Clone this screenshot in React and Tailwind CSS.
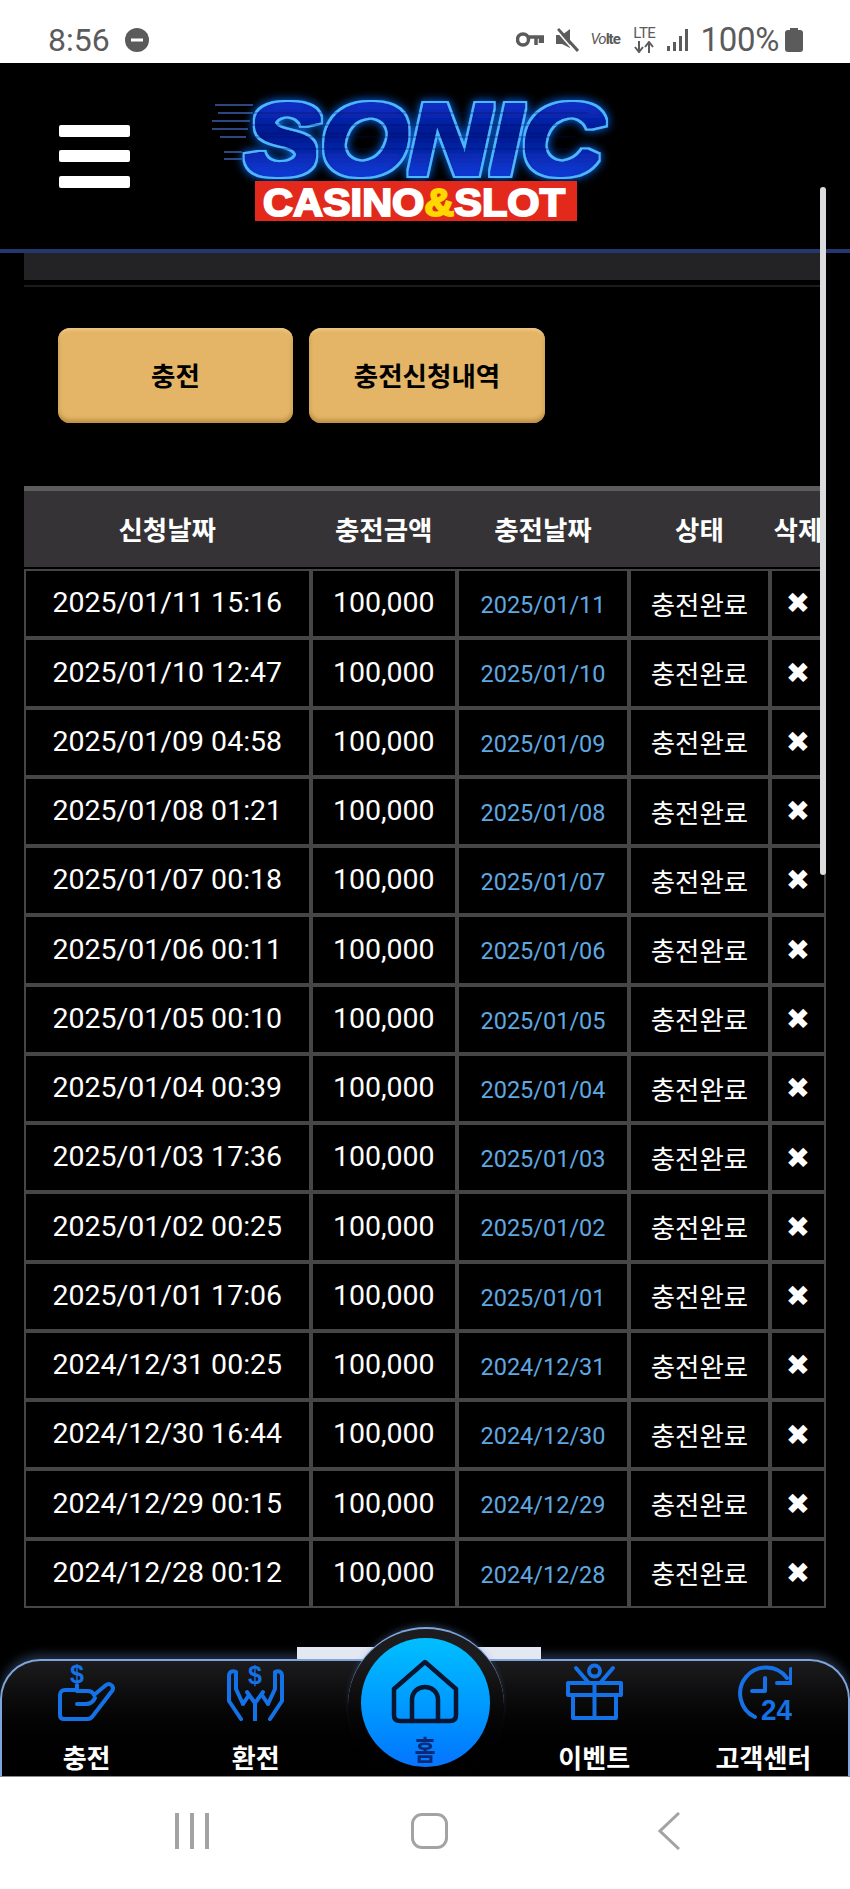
import React from 'react';

const rows = [
  ['2025/01/11 15:16', '2025/01/11'],
  ['2025/01/10 12:47', '2025/01/10'],
  ['2025/01/09 04:58', '2025/01/09'],
  ['2025/01/08 01:21', '2025/01/08'],
  ['2025/01/07 00:18', '2025/01/07'],
  ['2025/01/06 00:11', '2025/01/06'],
  ['2025/01/05 00:10', '2025/01/05'],
  ['2025/01/04 00:39', '2025/01/04'],
  ['2025/01/03 17:36', '2025/01/03'],
  ['2025/01/02 00:25', '2025/01/02'],
  ['2025/01/01 17:06', '2025/01/01'],
  ['2024/12/31 00:25', '2024/12/31'],
  ['2024/12/30 16:44', '2024/12/30'],
  ['2024/12/29 00:15', '2024/12/29'],
  ['2024/12/28 00:12', '2024/12/28'],
];

const gridCols = 'grid grid-cols-[286.5px_146.5px_172px_141px_56px]';
const cell = 'flex items-center justify-center border-2 border-[#464646]';

const StatusBar = () => (
  <div className="h-[63px] shrink-0 bg-white flex items-center justify-between pl-[48px] pr-[47px] pt-[16px] text-[#5b5b5b]">
    <div className="flex items-center gap-[15px]">
      <span className="text-[32px] leading-none">8:56</span>
      <svg width="24" height="24" viewBox="0 0 24 24">
        <circle cx="12" cy="12" r="12" fill="#5b5b5b" />
        <rect x="6" y="10.5" width="12" height="3" fill="#fff" />
      </svg>
    </div>
    <div className="flex items-center">
      <svg width="28" height="17" viewBox="0 0 28 17" fill="none" stroke="#5b5b5b" strokeWidth="3.5">
        <circle cx="7" cy="8.5" r="5.5" />
        <path d="M13 6H27V12M20 6V14M24.5 6V12" />
      </svg>
      <svg className="ml-[11px]" width="24" height="24" viewBox="0 0 24 24">
        <path d="M1 7H7L15 1V20L7 16H1Z" fill="#5b5b5b" />
        <path d="M3 1L23 23" stroke="#5b5b5b" strokeWidth="3" />
        <path d="M1 2L20 24" stroke="#fff" strokeWidth="1.5" />
      </svg>
      <span className="ml-[11px] w-[32px] text-[15px] font-bold leading-none tracking-[-1px] whitespace-nowrap"><span className="italic font-normal">Vo</span>lte</span>
      <div className="ml-[9px] w-[26px] flex flex-col items-center leading-none">
        <span className="text-[15px] tracking-[-0.5px]">LTE</span>
        <svg width="24" height="12" viewBox="0 0 24 12" fill="none" stroke="#5b5b5b" strokeWidth="2">
          <path d="M7 0V10M3 6L7 11L11 6M17 12V2M13 6L17 1L21 6" />
        </svg>
      </div>
      <svg className="ml-[10px]" width="22" height="22" viewBox="0 0 22 22" fill="#5b5b5b">
        <rect x="0" y="17" width="3" height="5" />
        <rect x="6" y="13" width="3" height="9" />
        <rect x="12" y="7" width="3" height="15" />
        <rect x="18" y="0" width="3" height="22" />
      </svg>
      <span className="ml-[11px] text-[33px] leading-none tracking-[-0.3px]">100%</span>
      <svg className="ml-[6px]" width="18" height="24" viewBox="0 0 18 24" fill="#5b5b5b">
        <rect x="5" y="0" width="8" height="3" />
        <rect x="0" y="2" width="18" height="22" rx="3" />
      </svg>
    </div>
  </div>
);

const Logo = () => (
  <svg width="410" height="150" viewBox="0 0 410 150" className="ml-[80px] mt-[8px]">
    <defs>
      <linearGradient id="sonicFill" x1="0" y1="0" x2="0" y2="1">
        <stop offset="0" stopColor="#0a40ee" />
        <stop offset="0.45" stopColor="#041688" />
        <stop offset="1" stopColor="#0a48f4" />
      </linearGradient>
      {/* neon outline + glow, all from the one text element */}
      <filter id="sonicNeon" x="-10%" y="-30%" width="120%" height="160%">
        <feMorphology in="SourceGraphic" operator="dilate" radius="2" result="fat" />
        <feMorphology in="SourceAlpha" operator="dilate" radius="3.5" result="outer" />
        <feFlood floodColor="#4db6ff" />
        <feComposite in2="outer" operator="in" result="line" />
        <feGaussianBlur in="outer" stdDeviation="5" result="blur" />
        <feFlood floodColor="#0b6cff" />
        <feComposite in2="blur" operator="in" result="glow" />
        <feMerge>
          <feMergeNode in="glow" />
          <feMergeNode in="line" />
          <feMergeNode in="fat" />
        </feMerge>
      </filter>
    </defs>
    <path d="M5 20H43M8 28H43M2 36H40M2 44H38M10 52H36M14 67H32M14 74H32" stroke="#3c5fa8" strokeWidth="1.5" />
    <text x="35" y="89" textLength="358" lengthAdjust="spacingAndGlyphs" fontFamily="Liberation Sans" fontStyle="italic" fontWeight="700" fontSize="100" fill="url(#sonicFill)" filter="url(#sonicNeon)">SONIC</text>
    <path d="M44 28H378M40 40H372M38 52H366M36 64H360" stroke="#020e5a" strokeWidth="1.5" opacity="0.35" />
    <rect x="45" y="96" width="322" height="40" fill="#e3281c" />
    <text x="53" y="131" textLength="302" lengthAdjust="spacingAndGlyphs" fontFamily="Liberation Sans" fontWeight="700" fontSize="39" fill="#fff" stroke="#fff" strokeWidth="2">
      CASINO<tspan fill="#ffd800" stroke="#ffd800">&amp;</tspan>SLOT
    </text>
  </svg>
);

const Header = () => (
  <header className="h-[190px] shrink-0 bg-black border-b-[4px] border-[#23386f] flex items-center pl-[59px]">
    <div className="w-[71px] flex flex-col gap-[13.5px]">
      <span className="h-[12px] rounded-[2px] bg-white" />
      <span className="h-[12px] rounded-[2px] bg-white" />
      <span className="h-[12px] rounded-[2px] bg-white" />
    </div>
    <Logo />
  </header>
);

const RechargeIcon = () => (
  <svg width="57" height="58" viewBox="0 0 57 58" fill="none" stroke="#1571e6" strokeWidth="4" strokeLinecap="round" strokeLinejoin="round">
    <text x="19" y="20" textAnchor="middle" fontFamily="Liberation Sans" fontWeight="700" fontSize="25" fill="#1571e6" stroke="none">$</text>
    <path d="M19 22V27H7C4 27 2 29 2 32V52C2 54 3 56 6 56H30C32 56 33 55 34 54L54 28C57 24 52 19 48 22L36 32C34 27 30 28 28 28H19" />
    <path d="M19 41H28C32 41 35 39 37 35" />
  </svg>
);

const ExchangeIcon = () => (
  <svg width="57" height="58" viewBox="0 0 57 58" fill="none" stroke="#1571e6" strokeWidth="4" strokeLinecap="round" strokeLinejoin="round">
    <text x="28" y="21" textAnchor="middle" fontFamily="Liberation Sans" fontWeight="700" fontSize="25" fill="#1571e6" stroke="none">$</text>
    <path d="M9 9C5 7 2 9 2 13V38L14 56M9 9V26L16 41M16 41L22 32" />
    <path d="M48 9C52 7 55 9 55 13V38L43 56M48 9V26L41 41M41 41L35 32" />
    <path d="M28 57V40L20 29M28 40L36 29" />
  </svg>
);

const GiftIcon = () => (
  <svg width="57" height="58" viewBox="0 0 57 58" fill="none" stroke="#1571e6" strokeWidth="4" strokeLinejoin="round">
    <path d="M2 20H55V32H2ZM7 32V55H50V32M28.5 20V55" />
    <path d="M10 5L22 19M47 5L35 19" strokeLinecap="round" />
    <circle cx="28.5" cy="8" r="5.5" />
  </svg>
);

const SupportIcon = () => (
  <svg width="57" height="58" viewBox="0 0 57 58" fill="none" stroke="#1571e6" strokeWidth="4" strokeLinecap="round" strokeLinejoin="round">
    <path d="M20 54A26 26 0 1 1 52 15" />
    <path d="M42 20H56V6M30 15V28H17" />
    <text x="26" y="57" textLength="31" lengthAdjust="spacingAndGlyphs" fontFamily="Liberation Sans" fontWeight="700" fontSize="29" fill="#1571e6" stroke="none">24</text>
  </svg>
);

const NavItem = ({ icon, label }) => (
  <div className="flex flex-col items-center pt-[2px]">
    {icon}
    <span className="mt-[23px] text-[26px] leading-[30px] font-bold text-white whitespace-nowrap">{label}</span>
  </div>
);

const BottomNav = () => (
  <nav className="absolute left-0 right-0 bottom-0 h-[117px] rounded-t-[40px] border-t-2 border-x-2 border-[#7ea6dc] bg-gradient-to-b from-[#1c1c1e] to-black shadow-[0_-5px_10px_rgba(110,150,220,0.3)]">
    <div className="absolute top-[-14px] left-[295px] w-[244px] h-[12px] bg-[#e4e8f2]" />
    <div className="absolute top-[-34px] left-[346px] w-[156px] h-[156px] rounded-full bg-gradient-to-b from-[#1c1c1e] from-[20%] to-black border-t-2 border-[#7ea6dc] shadow-[0_-4px_6px_-2px_rgba(110,150,220,0.3)]" />
    <div className="absolute top-[-23px] left-[358.5px] w-[129px] h-[129px] rounded-full bg-gradient-to-b from-[#00bfff] to-[#0a74ff] flex flex-col items-center pt-[21px]">
      <svg width="68" height="65" viewBox="0 0 68 65" fill="none" stroke="#0a1530" strokeWidth="4.5" strokeLinejoin="round" strokeLinecap="round">
        <path d="M34 3L65 30V56C65 60 63 62 59 62H9C5 62 3 60 3 56V30Z" />
        <path d="M21 62V41C21 33 27 28 34 28C41 28 47 33 47 41V62" />
      </svg>
      <span className="mt-[14px] text-[23px] leading-[28px] font-bold text-[#0a2a78] scale-y-[1.25]">홈</span>
    </div>
    <div className="relative grid grid-cols-5 h-full">
      <NavItem icon={<RechargeIcon />} label="충전" />
      <NavItem icon={<ExchangeIcon />} label="환전" />
      <div />
      <NavItem icon={<GiftIcon />} label="이벤트" />
      <NavItem icon={<SupportIcon />} label="고객센터" />
    </div>
  </nav>
);

const DepositTable = () => (
  <div className="mt-[63px] w-[802px]">
    <div className={`${gridCols} h-[81px] pt-[3px] border-t-[5px] border-[#5c5c5c] bg-[#353335] text-[26.5px] font-bold text-white`}>
      <div className="flex items-center justify-center">신청날짜</div>
      <div className="flex items-center justify-center">충전금액</div>
      <div className="flex items-center justify-center">충전날짜</div>
      <div className="flex items-center justify-center">상태</div>
      <div className="flex items-center justify-center whitespace-nowrap">삭제</div>
    </div>
    <div className="mt-[2px]">
      {rows.map(([requested, charged]) => (
        <div key={requested} className={`${gridCols} h-[69.27px] text-white`}>
          <div className={`${cell} text-[28.5px]`}>{requested}</div>
          <div className={`${cell} text-[28.5px]`}>100,000</div>
          <div className={`${cell} text-[23.5px] text-[#5fa8e0] pt-[4px]`}>{charged}</div>
          <div className={`${cell} text-[26.5px] pt-[4px]`}>충전완료</div>
          <div className={`${cell} text-[29px] pt-[1px] font-['DejaVu_Sans']`}>✖</div>
        </div>
      ))}
    </div>
  </div>
);

const AndroidBar = () => (
  <div className="h-[113px] shrink-0 bg-white border-t border-[#888] flex items-start pt-[36px] pl-[175px]">
    <div className="flex gap-[11px]">
      <span className="w-[4px] h-[36px] bg-[#a3a3a3]" />
      <span className="w-[4px] h-[36px] bg-[#a3a3a3]" />
      <span className="w-[4px] h-[36px] bg-[#a3a3a3]" />
    </div>
    <span className="ml-[202px] w-[37px] h-[36px] rounded-[11px] border-[3px] border-[#a3a3a3]" />
    <svg className="ml-[210px] -mt-[1px]" width="22" height="38" viewBox="0 0 22 38" fill="none" stroke="#a3a3a3" strokeWidth="3">
      <path d="M21 1L2 19L21 37" />
    </svg>
  </div>
);

export default function App() {
  return (
    <div className="relative w-[850px] h-[1889px] overflow-hidden flex flex-col bg-black font-[Roboto,'Noto_Sans_CJK_KR',sans-serif]">
      <StatusBar />
      <Header />
      <main className="relative flex-1 overflow-hidden pl-[24px]">
        <div className="h-[27px] w-[796px] bg-[#232325]" />
        <div className="mt-[5px] h-[2px] w-[796px] bg-[#1c1c1c]" />
        <div className="mt-[41px] ml-[34px] flex gap-[16px]">
          <button className="w-[235px] h-[95px] pt-[2px] rounded-[12px] bg-[#e4b566] text-[26.5px] font-bold text-black shadow-[inset_0_-3px_4px_#b98c45,inset_0_2px_3px_#f0cb8c]">충전</button>
          <button className="w-[236px] h-[95px] pt-[2px] rounded-[12px] bg-[#e4b566] text-[26.5px] font-bold text-black shadow-[inset_0_-3px_4px_#b98c45,inset_0_2px_3px_#f0cb8c]">충전신청내역</button>
        </div>
        <DepositTable />
        <BottomNav />
      </main>
      <AndroidBar />
      <div className="absolute left-[820px] top-[187px] w-[6px] h-[688px] rounded-full bg-[#dcdcdf]" />
    </div>
  );
}
